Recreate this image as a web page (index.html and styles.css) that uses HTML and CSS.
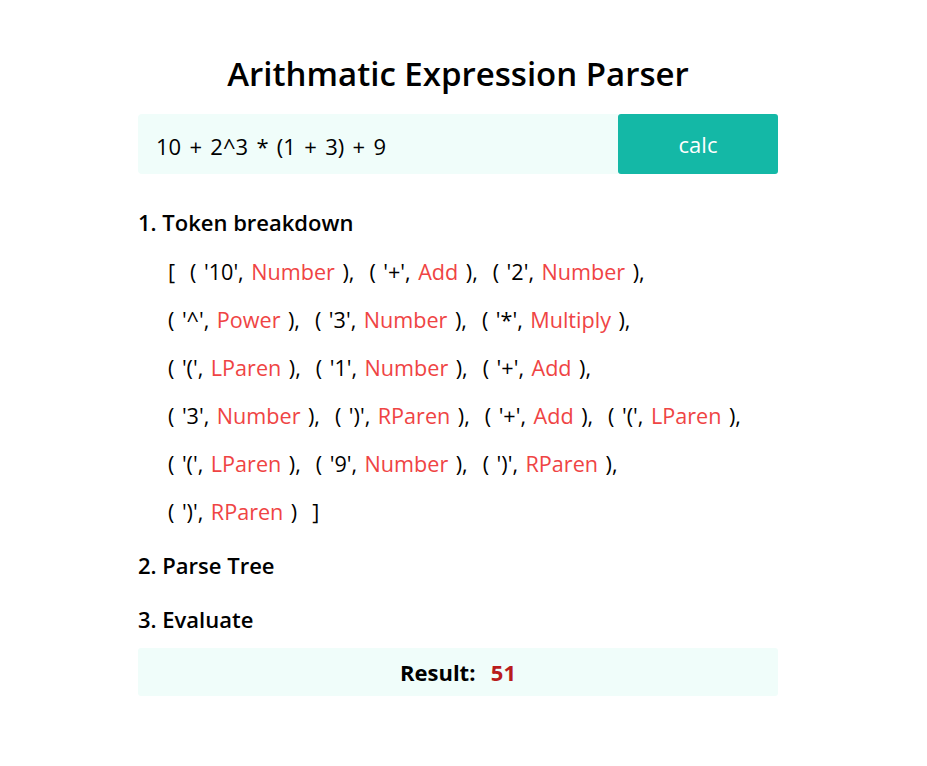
FILE: index.html
```html
<!DOCTYPE html>
<html>
<head>
<meta charset="utf-8">
<link rel="stylesheet" href="styles.css">
</head>
<body>
<div class="page">
  <h1 class="title">Arithmatic Expression Parser</h1>
  <div class="form">
    <div class="input">10 + 2^3 * (1 + 3) + 9</div>
    <button class="btn">calc</button>
  </div>
  <h2 class="step">1. Token breakdown</h2>
  <div class="tokens">
    <div class="line">[  ( '10', <span class="t">Number</span> ),  ( '+', <span class="t">Add</span> ),  ( '2', <span class="t">Number</span> ),</div>
    <div class="line">( '^', <span class="t">Power</span> ),  ( '3', <span class="t">Number</span> ),  ( '*', <span class="t">Multiply</span> ),</div>
    <div class="line">( '(', <span class="t">LParen</span> ),  ( '1', <span class="t">Number</span> ),  ( '+', <span class="t">Add</span> ),</div>
    <div class="line">( '3', <span class="t">Number</span> ),  ( ')', <span class="t">RParen</span> ),  ( '+', <span class="t">Add</span> ),  ( '(', <span class="t">LParen</span> ),</div>
    <div class="line">( '(', <span class="t">LParen</span> ),  ( '9', <span class="t">Number</span> ),  ( ')', <span class="t">RParen</span> ),</div>
    <div class="line">( ')', <span class="t">RParen</span> )  ]</div>
  </div>
  <h2 class="step">2. Parse Tree</h2>
  <h2 class="step">3. Evaluate</h2>
  <div class="result"><b>Result:</b>  <b class="num">51</b></div>
</div>
</body>
</html>
```
FILE: styles.css
```css
* { box-sizing: border-box; }
body {
  margin: 0;
  font-family: "Open Sans", "Noto Sans", sans-serif;
  color: #000;
  background: #fff;
}
.page {
  width: 640px;
  margin: 0 0 0 138px;
  padding-top: 52px;
}
.title {
  margin: 0;
  text-align: center;
  font-size: 33px;
  font-weight: 600;
  line-height: 44px;
}
.form {
  display: flex;
  margin-top: 18px;
  height: 60px;
}
.input {
  flex: 1;
  background: #f0fdfa;
  border-radius: 4px 0 0 4px;
  font-size: 22px;
  word-spacing: 2.6px;
  line-height: 60px;
  padding-left: 18px;
  padding-top: 2px;
}
.btn {
  width: 160px;
  border: none;
  border-radius: 3px;
  background: #14b8a6;
  color: #fff;
  font-family: inherit;
  font-size: 22px;
  padding: 0;
}
.step {
  margin: 0;
  font-size: 22px;
  font-weight: 600;
  line-height: 28px;
}
.form + .step { margin-top: 34px; }
.tokens {
  padding-left: 30px;
  padding-top: 12px;
}
.line {
  white-space: pre;
  font-size: 21.6px;
  word-spacing: 1.9px;
  line-height: 48px;
}
.t { color: #ef4444; }
.tokens + .step { margin-top: 15px; }
.step + .step { margin-top: 26px; }
.result {
  margin-top: 15px;
  height: 48px;
  background: #f0fdfa;
  border-radius: 3px;
  text-align: center;
  font-size: 22px;
  word-spacing: 2px;
  line-height: 48px;
  white-space: pre;
}
.result b { font-weight: 700; }
.num { color: #b91c1c; }
```
